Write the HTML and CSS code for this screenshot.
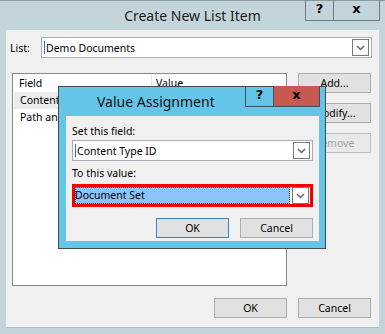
FILE: index.html
```html
<!DOCTYPE html>
<html lang="en">
<head>
<meta charset="UTF-8" />
<title>Create New List Item</title>
<link rel="stylesheet" href="styles.css">
</head>
<body>

<div class="window">
  <div class="titlebar">
    <div class="title">Create New List Item</div>
    <div class="caption-buttons">
      <div class="cap-btn help">?</div>
      <div class="cap-btn close">x</div>
    </div>
  </div>

  <div class="client">
    <div class="list-row">
      <span class="label">List:</span>
      <div class="combo wide">
        <span class="caret"></span>
        <span class="combo-text">Demo Documents</span>
        <span class="drop">
          <svg width="9" height="6" viewBox="0 0 9 6"><path d="M1 1 L4.5 4.5 L8 1" fill="none" stroke="#666" stroke-width="1.5"/></svg>
        </span>
      </div>
    </div>

    <div class="middle">
      <div class="listview">
        <div class="lv-header">
          <span class="col field">Field</span>
          <span class="col value">Value</span>
        </div>
        <div class="lv-row selected"><span class="col field">Content Type ID</span></div>
        <div class="lv-row"><span class="col field">Path and Folder</span></div>
      </div>
      <div class="side-buttons">
        <button class="btn">Add...</button>
        <button class="btn">Modify...</button>
        <button class="btn disabled">Remove</button>
      </div>
    </div>

    <div class="footer">
      <button class="btn">OK</button>
      <button class="btn">Cancel</button>
    </div>

    <div class="dialog">
      <div class="dlg-titlebar">
        <div class="dlg-title">Value Assignment</div>
        <div class="dlg-buttons">
          <div class="dlg-btn help">?</div>
          <div class="dlg-btn close">x</div>
        </div>
      </div>
      <div class="dlg-client">
        <div class="dlg-label">Set this field:</div>
        <div class="combo">
          <span class="caret"></span>
          <span class="combo-text">Content Type ID</span>
          <span class="drop">
            <svg width="9" height="6" viewBox="0 0 9 6"><path d="M1 1 L4.5 4.5 L8 1" fill="none" stroke="#666" stroke-width="1.5"/></svg>
          </span>
        </div>
        <div class="dlg-label second">To this value:</div>
        <div class="highlight">
          <div class="combo focused">
            <span class="combo-text sel">Document Set</span>
            <span class="drop">
              <svg width="9" height="6" viewBox="0 0 9 6"><path d="M1 1 L4.5 4.5 L8 1" fill="none" stroke="#666" stroke-width="1.5"/></svg>
            </span>
          </div>
        </div>
        <div class="dlg-footer">
          <button class="btn default">OK</button>
          <button class="btn">Cancel</button>
        </div>
      </div>
    </div>
  </div>
</div>

</body>
</html>
```

FILE: styles.css
```css
body {
  margin: 0;
  background: #c3d5db;
  font-family: "Noto Sans", "Open Sans", sans-serif;
  font-size: 10.5px;
  color: #000;
}
.window {
  width: 385px;
  height: 334px;
  border-top: 1px solid #8a9ca3;
  box-sizing: border-box;
}
.titlebar {
  height: 29px;
  position: relative;
}
.title {
  text-align: center;
  font-size: 14px;
  line-height: 29px;
  color: #1a1a1a;
}
.caption-buttons {
  position: absolute;
  top: -1px;
  left: 305px;
  display: flex;
}
.cap-btn {
  height: 21px;
  border: 1px solid #6f7c80;
  border-top: none;
  box-sizing: border-box;
  text-align: center;
  font-weight: bold;
  font-size: 13px;
  line-height: 18px;
  font-family: "DejaVu Sans", sans-serif;
}
.cap-btn.help {
  width: 29px;
}
.cap-btn.close {
  width: 46px;
  border-left: none;
}
.client {
  position: relative;
  margin-left: 6px;
  width: 373px;
  height: 297px;
  background: #f0f0f0;
  box-shadow: 0 1px 0 #aebcc1;
}
.list-row {
  display: flex;
  align-items: center;
  padding: 7px 0 0 4px;
  height: 21px;
}
.label {
  width: 31px;
}
.combo {
  display: flex;
  align-items: center;
  height: 21px;
  box-sizing: border-box;
  background: #fff;
  border: 1px solid #abadb3;
  position: relative;
}
.combo.wide {
  width: 331px;
}
.caret {
  width: 1px;
  height: 13px;
  background: #3b6ec9;
  margin-left: 2px;
}
.combo-text {
  flex: 1;
  padding-left: 1px;
  white-space: nowrap;
}
.drop {
  width: 15px;
  height: 15px;
  border: 1px solid #7a7a7a;
  margin-right: 2px;
  display: flex;
  align-items: center;
  justify-content: center;
  background: #fff;
}
.middle {
  display: flex;
  margin-top: 15px;
  padding-left: 6px;
}
.listview {
  width: 275px;
  height: 213px;
  box-sizing: border-box;
  background: #fff;
  border: 1px solid #828790;
  overflow: hidden;
}
.lv-header {
  display: flex;
  height: 17px;
  line-height: 18px;
  border-bottom: 1px solid #fff;
}
.lv-header .field {
  width: 132px;
  border-right: 1px solid #e5e5e5;
}
.lv-header .value {
  padding-left: 4px;
}
.col {
  padding-left: 6px;
  white-space: nowrap;
}
.lv-row {
  height: 17px;
  line-height: 17px;
  margin-left: 1px;
}
.lv-row.selected {
  background: #ececec;
  margin-right: 140px;
}
.side-buttons {
  display: flex;
  flex-direction: column;
  gap: 10px;
  margin-left: 11px;
}
.btn {
  width: 73px;
  height: 20px;
  padding: 0;
  background: #e1e1e1;
  border: 1px solid #adadad;
  font-family: inherit;
  font-size: 10.5px;
  color: #000;
}
.btn.disabled {
  color: #a0a0a0;
  border-color: #bfbfbf;
  background: #e9e9e9;
}
.btn.default {
  border-color: #3a7fbf;
}
.footer {
  display: flex;
  justify-content: flex-end;
  gap: 11px;
  padding: 12px 8px 0 0;
}
.dialog {
  position: absolute;
  left: 52px;
  top: 56px;
  width: 268px;
  height: 163px;
  box-sizing: border-box;
  background: #64c5e9;
  border: 1px solid #454b4e;
  padding: 0 6px 6px 7px;
}
.dlg-titlebar {
  height: 29px;
  position: relative;
}
.dlg-title {
  font-size: 14px;
  line-height: 29px;
  padding-left: 31px;
  color: #111;
}
.dlg-buttons {
  position: absolute;
  top: -1px;
  left: 179px;
  display: flex;
}
.dlg-btn {
  height: 21px;
  box-sizing: border-box;
  border: 1px solid #3c5560;
  border-top: none;
  text-align: center;
  font-weight: bold;
  font-size: 13px;
  line-height: 18px;
  font-family: "DejaVu Sans", sans-serif;
}
.dlg-btn.help {
  width: 29px;
}
.dlg-btn.close {
  width: 46px;
  border-left: none;
  background: #c75a50;
}
.dlg-client {
  background: #f0f0f0;
  height: 125px;
  padding: 0 6px;
}
.dlg-label {
  padding-top: 6px;
  height: 18px;
  line-height: 18px;
}
.dlg-label.second {
  padding-top: 5px;
  height: 15px;
  line-height: 15px;
}
.highlight {
  margin-top: 3px;
  border: 3px solid #f20000;
}
.combo.focused {
  height: 17px;
  border: none;
}
.combo-text.sel {
  margin: 0 2px 0 0;
  padding-left: 0;
  background: #8cc3fd;
  outline: 1px dotted #333;
  outline-offset: -1px;
  line-height: 17px;
}
.focused .drop {
  margin-right: 1px;
}
.dlg-footer {
  display: flex;
  justify-content: flex-end;
  gap: 11px;
  margin-top: 11px;
}
```
